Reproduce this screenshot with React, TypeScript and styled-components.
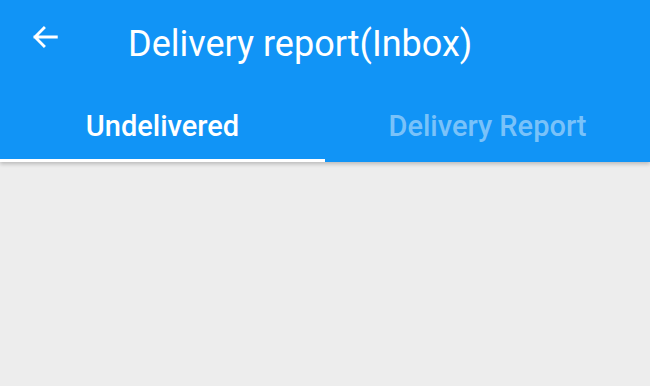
import React, { useState } from "react";
import styled, { createGlobalStyle } from "styled-components";

const GlobalStyle = createGlobalStyle`
  html, body {
    margin: 0;
    padding: 0;
    background: #ededed;
    font-family: Roboto, "Noto Sans", Arial, sans-serif;
  }
`;

const tabs = ["Undelivered", "Delivery Report"];

export default function App() {
  const [active, setActive] = useState(0);

  return (
    <Page>
      <GlobalStyle />
      <AppBar>
        <Toolbar>
          <BackButton aria-label="back">
            <svg width="32" height="32" viewBox="0 0 24 24" fill="none">
              <path
                d="M20.5 12H4.5M11.2 5.3L4.5 12l6.7 6.7"
                stroke="#fff"
                strokeWidth="2.1"
                strokeLinecap="square"
              />
            </svg>
          </BackButton>
          <Title>Delivery report(Inbox)</Title>
        </Toolbar>
        <TabRow>
          {tabs.map((t, i) => (
            <Tab key={t} $active={i === active} onClick={() => setActive(i)}>
              {t}
            </Tab>
          ))}
        </TabRow>
      </AppBar>
      <Content />
    </Page>
  );
}

const Page = styled.div`
  width: 650px;
  height: 386px;
  display: flex;
  flex-direction: column;
  background: #ededed;
  overflow: hidden;
`;

const AppBar = styled.div`
  background: #1194f6;
  box-shadow: 0 2px 4px rgba(0, 0, 0, 0.22);
  position: relative;
  z-index: 1;
`;

const Toolbar = styled.div`
  height: 90px;
  display: flex;
  align-items: center;
`;

const BackButton = styled.button`
  width: 56px;
  height: 56px;
  margin-left: 17px;
  margin-top: -16px;
  display: flex;
  align-items: center;
  justify-content: center;
  background: none;
  border: none;
  padding: 0;
  cursor: pointer;
`;

const Title = styled.div`
  margin-left: 55px;
  margin-top: -2px;
  color: #fff;
  font-size: 36px;
  font-weight: 400;
`;

const TabRow = styled.div`
  display: flex;
  height: 72px;
`;

const Tab = styled.div<{ $active: boolean }>`
  flex: 1;
  display: flex;
  align-items: center;
  justify-content: center;
  padding-top: 2px;
  box-sizing: border-box;
  font-size: 29px;
  font-weight: 500;
  color: ${(p) => (p.$active ? "#ffffff" : "rgba(255,255,255,0.45)")};
  border-bottom: 3px solid ${(p) => (p.$active ? "#ffffff" : "transparent")};
  cursor: pointer;
`;

const Content = styled.div`
  flex: 1;
  background: #ededed;
`;
